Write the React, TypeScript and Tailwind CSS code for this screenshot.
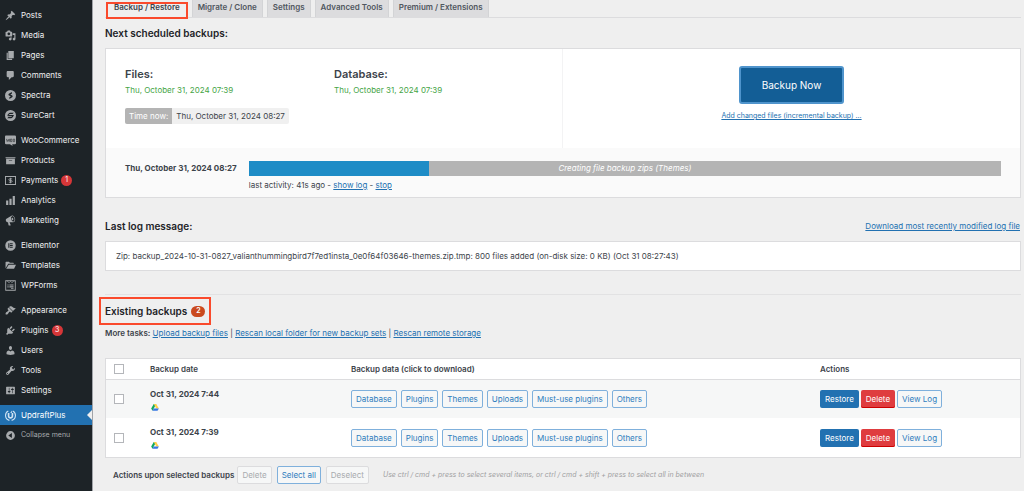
import type { ReactNode } from "react";

const FONT = "font-['Inter','Liberation_Sans',sans-serif]";
const LINK = "text-[#2271b1] underline";
const OUTLINE_BUTTON =
  "h-[18px] rounded-[2px] border border-[#7fb0dc] bg-[#f6f7f7] px-1 text-[8px] leading-none text-[#2f7dbd]";
const MUTED_BUTTON =
  "h-[18px] rounded-[2px] border border-[#dcdcde] bg-[#f6f7f7] px-1 text-[8px] leading-none text-[#a7aaad]";

function Glyph({ children }: { children: ReactNode }) {
  return (
    <svg viewBox="0 0 20 20" className="h-[11px] w-[11px] shrink-0 fill-current" aria-hidden="true">
      {children}
    </svg>
  );
}

type Item = { label: string; icon: ReactNode; badge?: number; active?: boolean; muted?: boolean };

const menu: Item[][] = [
  [
    {
      label: "Posts",
      icon: (
        <path d="M10.44 3.02l1.82-1.82 6.36 6.35-1.83 1.82c-1.05-.68-2.48-.57-3.41.36l-.75.75c-.92.93-1.04 2.35-.35 3.41l-1.83 1.82-2.41-2.41-2.8 2.79c-.42.42-3.38 2.71-3.8 2.29s1.86-3.39 2.28-3.81l2.79-2.79L4.1 9.36l1.83-1.82c1.05.69 2.48.57 3.4-.36l.75-.75c.93-.92 1.05-2.35.36-3.41z" />
      ),
    },
    {
      label: "Media",
      icon: (
        <path d="M13 11V4c0-.55-.45-1-1-1h-1.67L9 1H5L3.67 3H2c-.55 0-1 .45-1 1v7c0 .55.45 1 1 1h10c.55 0 1-.45 1-1zM7 4.5c1.38 0 2.5 1.12 2.5 2.5S8.38 9.5 7 9.5 4.5 8.38 4.5 7 5.62 4.5 7 4.5zM14 6h5v10.5c0 1.38-1.12 2.5-2.5 2.5S14 17.88 14 16.5s1.12-2.5 2.5-2.5c.17 0 .34.02.5.05V9h-3V6zm-4 8.05V13h2v3.5c0 1.38-1.12 2.5-2.5 2.5S7 17.88 7 16.5 8.12 14 9.5 14c.17 0 .34.02.5.05z" />
      ),
    },
    { label: "Pages", icon: <path d="M6 15V2h10v13H6zm-1 1h8v2H3V5h2v11z" /> },
    {
      label: "Comments",
      icon: <path d="M5 2h9c1.1 0 2 .9 2 2v7c0 1.1-.9 2-2 2h-2l-5 5v-5H5c-1.1 0-2-.9-2-2V4c0-1.1.9-2 2-2z" />,
    },
    {
      label: "Spectra",
      icon: (
        <path
          fillRule="evenodd"
          d="M10 0a10 10 0 1 0 0 20 10 10 0 0 0 0-20zM12.5 3.5v3.2L9.6 8.4l3.7 1.8c.9.9.8 2.3-.2 3L8 16.5v-3.3l2.7-1.7-3.6-1.7c-1.1-.8-1.1-2.2-.1-3z"
        />
      ),
    },
    {
      label: "SureCart",
      icon: (
        <path
          fillRule="evenodd"
          d="M10 0a10 10 0 1 0 0 20 10 10 0 0 0 0-20zM9.2 5h6.8l-2.2 2.3H8.5L5.8 10H3.6l2.8-3.4C7.1 5.6 8 5 9.2 5zM6 9.2h8.2l2.3.3-2.6 3.7c-.8 1.2-1.7 1.8-3 1.8H4l2.2-2.3h5.3l1.5-1.5H5z"
        />
      ),
    },
  ],
  [
    {
      label: "WooCommerce",
      icon: (
        <>
          <path d="M2 1h16a2 2 0 0 1 2 2v12a2 2 0 0 1-2 2h-5l1 3-5-3H2a2 2 0 0 1-2-2V3c0-1.1.9-2 2-2z" />
          <path
            d="M2.5 7l1.5 5 2-4 1.5 4 1-5M10 7.5h2.5v4.5H10zM15 7.5h2.5v4.5H15z"
            className="fill-none stroke-[#1d2327]"
            strokeWidth="1"
          />
        </>
      ),
    },
    { label: "Products", icon: <path d="M19 4v2H1V4h18zM2 7h16v10H2V7zm11 3V9H7v1h6z" /> },
    {
      label: "Payments",
      badge: 1,
      icon: (
        <>
          <path fillRule="evenodd" d="M0 2h20v16H0zM1.7 3.7v12.6h16.6V3.7z" />
          <path
            d="M13 7H8.5a1.5 1.5 0 0 0 0 3h3a1.5 1.5 0 0 1 0 3H7M10 5v10"
            className="fill-none stroke-current"
            strokeWidth="1.6"
          />
        </>
      ),
    },
    { label: "Analytics", icon: <path d="M18 18V2h-4v16h4zm-6 0V7H8v11h4zm-6 0v-8H2v8h4z" /> },
    {
      label: "Marketing",
      icon: (
        <path d="M18.15 5.94c.46 1.62.38 3.22-.02 4.48-.42 1.28-1.26 2.18-2.3 2.48-.16.06-.26.06-.4.06-.06.02-.12.02-.18.02-.06.02-.14.02-.22.02h-6.8l2.22 5.5c.02.14-.06.26-.14.34-.08.1-.24.16-.34.16H6.95c-.1 0-.26-.06-.34-.16-.08-.08-.16-.2-.14-.34l-1-5.5H4.25l-.02-.02c-.5.06-1.08-.18-1.54-.62s-.88-1.08-1.06-1.88c-.24-.8-.2-1.56-.02-2.2.18-.62.58-1.08 1.06-1.3l.02-.02 9-5.4c.1-.06.18-.1.24-.16.06-.04.14-.08.24-.12.16-.08.28-.12.5-.18 1.04-.3 2.24.1 3.22.98s1.84 2.24 2.26 3.86zm-2.58 5.98h-.02c.4-.1.74-.34 1.04-.7.58-.7.86-1.76.86-3.04 0-.64-.1-1.3-.28-1.98-.34-1.36-1.02-2.5-1.78-3.24s-1.68-1.1-2.46-.88c-.82.22-1.4.96-1.7 2-.32 1.04-.28 2.36.06 3.72.38 1.36 1 2.5 1.8 3.24.78.74 1.62 1.1 2.48.88zm-2.54-7.08c.22-.04.42-.02.62.04.38.16.76.48 1.02 1s.42 1.2.42 1.78c0 .3-.04.56-.12.8-.18.48-.44.84-.86.94-.34.1-.8-.06-1.14-.4s-.64-.86-.78-1.5c-.18-.62-.12-1.24.02-1.72s.48-.84.82-.94z" />
      ),
    },
  ],
  [
    {
      label: "Elementor",
      icon: (
        <path
          fillRule="evenodd"
          d="M10 .5a9.5 9.5 0 1 0 0 19 9.5 9.5 0 0 0 0-19zM6 6h2v8H6zM9 6h5v1.8H9zM9 9.1h5v1.8H9zM9 12.2h5V14H9z"
        />
      ),
    },
    {
      label: "Templates",
      icon: <path d="M1 15V4c0-.6.4-1 1-1h5l2 2h6c.6 0 1 .4 1 1v1H6zM6.8 8.5H20L16.5 16H2.2z" />,
    },
    {
      label: "WPForms",
      icon: (
        <>
          <path fillRule="evenodd" d="M.5.5h19v19H.5zM2.1 2.1v15.800h15.800V2.100z" />
          <path d="M4 2l3.500 3L10 2.500 12.500 5 16 2" className="fill-none stroke-current" strokeWidth="1.200" />
          <path d="M4.500 8h2v2h-2zM8 8h7.500v2H8zM4.500 11.500h2v2h-2zM8 11.500h7.500v2H8zM11 15h4.500v1.500H11z" />
        </>
      ),
    },
  ],
  [
    {
      label: "Appearance",
      icon: (
        <path d="M14.48 11.06L7.41 3.99l1.5-1.5c.5-.56 2.3-.47 3.51.32 1.21.8 1.43 1.28 2.91 2.1 1.18.64 2.45 1.26 4.45.85zm-.71.71L6.7 4.7 4.93 6.47c-.39.39-.39 1.02 0 1.41l1.06 1.06c.39.39.39 1.03 0 1.42-.6.6-1.43 1.11-2.21 1.69-.35.26-.7.53-1.01.84C1.43 14.23.4 16.08 1.4 17.07c.99 1 2.84-.03 4.18-1.36.31-.31.58-.66.85-1.02.57-.78 1.08-1.61 1.69-2.21.39-.39 1.02-.39 1.41 0l1.06 1.06c.39.39 1.02.39 1.41 0z" />
      ),
    },
    {
      label: "Plugins",
      badge: 3,
      icon: (
        <path d="M13.11 4.36L9.87 7.6 8 5.73l3.24-3.24c.35-.34 1.05-.2 1.56.32.52.51.66 1.21.31 1.55zm-8 1.77l.91-1.12 9.01 9.01-1.19.84c-.71.71-2.63 1.16-3.82 1.16H6.14L4.9 17.26c-.59.59-1.54.59-2.12 0-.59-.58-.59-1.53 0-2.12l1.24-1.24v-3.88c0-1.13.4-3.19 1.09-3.89zm7.26 3.97l3.24-3.24c.34-.35 1.04-.21 1.55.31.52.51.66 1.21.31 1.55l-3.24 3.25z" />
      ),
    },
    {
      label: "Users",
      icon: (
        <path d="M10 9.25c-2.27 0-2.73-3.44-2.73-3.44C7 4.02 7.82 2 9.97 2c2.16 0 2.98 2.02 2.71 3.81 0 0-.41 3.44-2.68 3.44zm0 2.57L12.72 10c2.39 0 4.52 2.33 4.52 4.53v2.49s-3.65 1.13-7.24 1.13c-3.65 0-7.24-1.13-7.24-1.13v-2.49c0-2.25 1.94-4.48 4.47-4.48z" />
      ),
    },
    {
      label: "Tools",
      icon: (
        <path d="M16.68 9.77c-1.34 1.34-3.3 1.67-4.95.99l-5.41 6.52c-.99.99-2.59.99-3.58 0s-.99-2.59 0-3.57l6.52-5.42c-.68-1.65-.35-3.61.99-4.95 1.28-1.28 3.12-1.62 4.72-1.06l-2.89 2.89 2.82 2.82 2.86-2.87c.53 1.58.18 3.39-1.08 4.65zM3.81 16.21c.4.39 1.04.39 1.43 0 .4-.4.4-1.04 0-1.43-.39-.4-1.03-.4-1.43 0-.39.39-.39 1.03 0 1.43z" />
      ),
    },
    {
      label: "Settings",
      icon: (
        <path d="M18 16V4c0-.55-.45-1-1-1H3c-.55 0-1 .45-1 1v12c0 .55.45 1 1 1h14c.55 0 1-.45 1-1zM8 11h1c.55 0 1 .45 1 1s-.45 1-1 1H8v1.5c0 .28-.22.5-.5.5s-.5-.22-.5-.5V13H6c-.55 0-1-.45-1-1s.45-1 1-1h1V5.5c0-.28.22-.5.5-.5s.5.22.5.5V11zm5-2h-1c-.55 0-1-.45-1-1s.45-1 1-1h1V5.5c0-.28.22-.5.5-.5s.5.22.5.5V7h1c.55 0 1 .45 1 1s-.45 1-1 1h-1v5.5c0 .28-.22.5-.5.5s-.5-.22-.5-.5V9z" />
      ),
    },
  ],
  [
    {
      label: "UpdraftPlus",
      active: true,
      icon: (
        <>
          <path
            d="M6 2A9 9 0 0 0 8 18.8M14 2a9 9 0 0 1-2 16.8"
            className="fill-none stroke-current"
            strokeWidth="2"
          />
          <path d="M5 5.5h3V11c0 2.6 4 2.6 4 0V5.5H9.5L12.5 1v4.5H15V11c0 6.5-10 6.5-10 0z" />
        </>
      ),
    },
    {
      label: "Collapse menu",
      muted: true,
      icon: <path fillRule="evenodd" d="M10 2a8 8 0 1 0 0 16 8 8 0 0 0 0-16zM12.5 5.5v9L6 10z" />,
    },
  ],
];

function MenuRow({ label, icon, badge, active, muted }: Item) {
  const tone = active
    ? "bg-[#2271b1] text-[8px] text-white"
    : muted
      ? "text-[7px] text-[#a7aaad]"
      : "text-[8px] text-[#f0f0f1]";
  const iconTone = active ? "text-[#cfe2f3]" : "text-[#a7aaad]";
  return (
    <li>
      <a href="#" className={`relative flex h-5 items-center pl-[5px] ${tone}`}>
        <span className={iconTone}>
          <Glyph>{icon}</Glyph>
        </span>
        <span className="ml-[5px] whitespace-nowrap">{label}</span>
        {badge && (
          <span className="ml-[3px] flex h-[11px] w-[11px] items-center justify-center rounded-full bg-[#d63638] text-[7px] text-white">
            {badge}
          </span>
        )}
        {active && (
          <span className="absolute top-[5px] right-0 border-y-5 border-r-5 border-y-transparent border-r-[#efefef]" />
        )}
      </a>
    </li>
  );
}

function DriveIcon() {
  return (
    <svg viewBox="0 0 24 22" className="h-[7px] w-[8px]" role="img" aria-label="Google Drive">
      <path d="M8 0h8l-4 7-8 14-4-7z" fill="#11a861" />
      <path d="M8 0h8l8 14h-8z" fill="#ffcf48" />
      <path d="M8 14h16l-4 7.5H4z" fill="#3777e3" />
    </svg>
  );
}

const tabs = ["Migrate / Clone", "Settings", "Advanced Tools", "Premium / Extensions"];
const parts = ["Database", "Plugins", "Themes", "Uploads", "Must-use plugins", "Others"];
const backups = ["Oct 31, 2024 7:44", "Oct 31, 2024 7:39"];
const progress = 24;

function Check({ label }: { label: string }) {
  return (
    <input
      type="checkbox"
      aria-label={label}
      className="mx-auto block h-[10px] w-[10px] appearance-none border border-[#b4b6ba] bg-white"
    />
  );
}

export default function App() {
  return (
    <div className={`flex min-h-screen bg-[#efefef] text-[8px] leading-[12px] text-[#3c434a] ${FONT}`}>
      <nav aria-label="Admin menu" className="w-[93px] shrink-0 border-r border-[#a0a3a8] bg-[#1d2327] pt-[5px]">
        <div className="flex flex-col gap-[5px]">
          {menu.map((group) => (
            <ul key={group[0].label}>
              {group.map((item) => (
                <MenuRow key={item.label} {...item} />
              ))}
            </ul>
          ))}
        </div>
      </nav>

      <main className="min-w-0 flex-1 pr-[3px] pl-3">
        <div className="flex h-[18px] items-stretch gap-1 border-b border-[#dcdcde] pl-px text-[8px] font-semibold text-[#50575e]">
          <a href="#" className="relative flex items-center px-2 pb-1 text-[#3c434a]">
            Backup / Restore
            <span className="absolute inset-x-0 top-[2px] -bottom-[2px] border-2 border-[#fa4a2c]" />
          </a>
          {tabs.map((tab) => (
            <a key={tab} href="#" className="flex items-center border-x border-[#d3d4d6] bg-[#dcdcde] px-[5px] pb-1">
              {tab}
            </a>
          ))}
        </div>

        <h2 className="mt-[7px] text-[10px] leading-4 font-semibold text-[#1d2327]">Next scheduled backups:</h2>

        <section className="mt-[7px] border border-[#dcdcde] bg-white">
          <div className="grid h-[99px] grid-cols-2">
            <div className="border-r border-[#f3f3f4] px-[19px] pt-[17px]">
              <div className="grid grid-cols-2">
                {["Files:", "Database:"].map((name) => (
                  <div key={name}>
                    <h3 className="text-[11px] leading-4 font-semibold">{name}</h3>
                    <p className="mt-px leading-[14px] text-[#46a546]">Thu, October 31, 2024 07:39</p>
                  </div>
                ))}
              </div>
              <div className="mt-[11px] flex h-4 w-fit items-center overflow-hidden rounded-[2px] bg-[#f0f0f0]">
                <span className="flex h-full items-center bg-[#b4b4b4] px-1 text-white">Time now:</span>
                <span className="px-1">Thu, October 31, 2024 08:27</span>
              </div>
            </div>
            <div className="flex flex-col items-center pt-[17px]">
              <button
                type="button"
                className="h-[38px] rounded-[3px] border-2 border-[#4f94cc] bg-[#135e96] px-[21px] text-[10px] text-white"
              >
                Backup Now
              </button>
              <a href="#" className={`mt-[6px] text-[7px] ${LINK}`}>
                Add changed files (incremental backup) ...
              </a>
            </div>
          </div>
          <div className="flex h-[49px] gap-3 bg-[#fafafa] pt-[13px] pr-[19px] pl-[19px]">
            <strong className="leading-[15px] font-bold whitespace-nowrap">Thu, October 31, 2024 08:27</strong>
            <div className="flex-1">
              <div className="relative h-[15px] bg-[#b4b4b4] text-center leading-[15px] text-white italic">
                <div className="absolute inset-y-0 left-0 bg-[#1e8cc6]" style={{ width: `${progress}%` }} />
                Creating file backup zips (Themes)
              </div>
              <p className="mt-[3px]">
                last activity: 41s ago -{" "}
                <a href="#" className={LINK}>
                  show log
                </a>{" "}
                -{" "}
                <a href="#" className={LINK}>
                  stop
                </a>
              </p>
            </div>
          </div>
        </section>

        <div className="mt-5 flex items-center justify-between">
          <h2 className="text-[10px] leading-4 font-semibold text-[#1d2327]">Last log message:</h2>
          <a href="#" className={`pr-px ${LINK}`}>
            Download most recently modified log file
          </a>
        </div>
        <section className="mt-[7px] border border-[#dcdcde] bg-white px-[10px] py-2">
          Zip: backup_2024-10-31-0827_valianthummingbird7f7ed1insta_0e0f64f03646-themes.zip.tmp: 800 files added
          (on-disk size: 0 KB) (Oct 31 08:27:43)
        </section>

        <hr className="mt-[23px] border-[#e2e2e3]" />

        <h2 className="relative mt-2 flex w-fit items-center gap-1 text-[10px] leading-4 font-semibold text-[#1d2327]">
          Existing backups
          <span className="flex h-[11px] w-[14px] items-center justify-center rounded-full bg-[#ca4a1f] text-[7px] text-white">
            2
          </span>
          <span className="absolute -inset-[6px] border-2 border-[#fa4a2c]" />
        </h2>
        <p className="mt-2">
          <strong className="font-semibold">More tasks:</strong>{" "}
          <a href="#" className={LINK}>
            Upload backup files
          </a>{" "}
          |{" "}
          <a href="#" className={LINK}>
            Rescan local folder for new backup sets
          </a>{" "}
          |{" "}
          <a href="#" className={LINK}>
            Rescan remote storage
          </a>
        </p>

        <div className="mt-[19px] border border-[#dcdcde] bg-white">
          <table className="w-full table-fixed border-collapse text-left">
            <colgroup>
              <col className="w-[25px]" />
              <col className="w-[220px]" />
              <col />
              <col className="w-[200px]" />
            </colgroup>
            <thead>
              <tr className="h-5 border-b border-[#dcdcde]">
                <th>
                  <Check label="Select all backups" />
                </th>
                <th className="pl-[19px] font-semibold">Backup date</th>
                <th className="font-semibold">Backup data (click to download)</th>
                <th className="font-semibold">Actions</th>
              </tr>
            </thead>
            <tbody>
              {backups.map((date) => (
                <tr key={date} className="h-[39px] odd:bg-[#f6f7f7]">
                  <td>
                    <Check label={`Select backup ${date}`} />
                  </td>
                  <td className="pl-[19px] align-top">
                    <strong className="mt-2 block font-bold">{date}</strong>
                    <span className="mt-1 ml-px block">
                      <DriveIcon />
                    </span>
                  </td>
                  <td>
                    <div className="flex gap-1">
                      {parts.map((part) => (
                        <button key={part} type="button" className={OUTLINE_BUTTON}>
                          {part}
                        </button>
                      ))}
                    </div>
                  </td>
                  <td>
                    <div className="flex gap-[2px]">
                      <button
                        type="button"
                        className="h-[18px] rounded-[2px] bg-[#2271b1] px-[5px] leading-none text-white"
                      >
                        Restore
                      </button>
                      <button
                        type="button"
                        className="h-[18px] rounded-[2px] bg-[#df3c3f] px-[5px] leading-none text-white shadow-[inset_0_-1px_0_#cc0000]"
                      >
                        Delete
                      </button>
                      <button type="button" className={OUTLINE_BUTTON}>
                        View Log
                      </button>
                    </div>
                  </td>
                </tr>
              ))}
            </tbody>
          </table>
        </div>

        <div className="mt-2 flex items-center pl-2">
          <strong className="mr-[3px] font-semibold">Actions upon selected backups</strong>
          <div className="flex gap-[5px]">
            <button type="button" disabled className={MUTED_BUTTON}>
              Delete
            </button>
            <button type="button" className={OUTLINE_BUTTON}>
              Select all
            </button>
            <button type="button" disabled className={MUTED_BUTTON}>
              Deselect
            </button>
          </div>
          <em className="ml-[14px] text-[7px] text-[#a0a0a2]">
            Use ctrl / cmd + press to select several items, or ctrl / cmd + shift + press to select all in between
          </em>
        </div>
      </main>
    </div>
  );
}
